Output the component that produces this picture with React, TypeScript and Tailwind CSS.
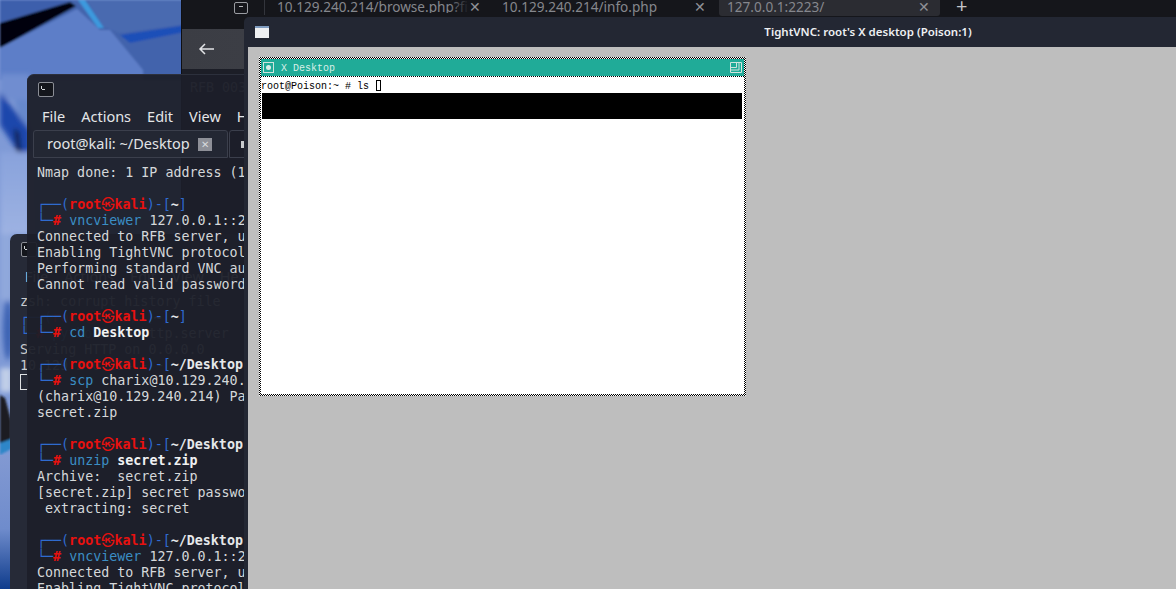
const mono = "font-['DejaVu_Sans_Mono','Noto_Sans_CJK_KR',monospace]"

// box-drawing prompt, two rows, same as kali zsh
const Prompt = ({ path }: { path: string }) => (
  <div className="h-4">
    <span className="text-[#2f6bd0]">┌──(</span>
    <span className="font-bold text-[#e8110f]">root㉿kali</span>
    <span className="text-[#2f6bd0]">)-[</span>
    <span className="font-bold text-[#e6e8ea]">{path}</span>
    <span className="text-[#2f6bd0]">]</span>
  </div>
)

const Cmd = ({ cmd, arg, bold }: { cmd: string; arg: string; bold?: boolean }) => (
  <div className="h-4">
    <span className="text-[#2f6bd0]">└─</span>
    <span className="font-bold text-[#e8110f]">#</span>
    <span className="text-[#3b8ec4]"> {cmd} </span>
    <span className={bold ? "font-bold text-[#f0f1f2]" : ""}>{arg}</span>
  </div>
)

const Line = ({ children }: { children?: string }) => <div className="h-4 whitespace-pre">{children}</div>

const TermIcon = () => (
  <div className="w-4 h-[15px] rounded-[2px] border border-[#8b8e96] bg-[#14161c] relative">
    <div className="absolute left-[2px] top-[3px] w-[1px] h-[3px] bg-[#d5d7da]" />
    <div className="absolute left-[3px] top-[6px] w-[3px] h-[1px] bg-[#d5d7da]" />
  </div>
)

const Menu = () => (
  <div className="h-[26px] flex items-center pl-[15px] pb-[1px] gap-[16px] text-[14.5px] text-[#e4e6e8] font-['Noto_Sans',sans-serif] whitespace-nowrap">
    <span>File</span>
    <span>Actions</span>
    <span>Edit</span>
    <span>View</span>
    <span>Help</span>
  </div>
)

const Wallpaper = () => (
  <svg className="absolute inset-0" width="1176" height="589" viewBox="0 0 1176 589">
    <defs>
      <filter id="soft" x="-20%" y="-20%" width="140%" height="140%"><feGaussianBlur stdDeviation="2.5" /></filter>
      <filter id="soft2" x="-5%" y="-5%" width="110%" height="110%"><feGaussianBlur stdDeviation="1" /></filter>
      <linearGradient id="bot" x1="0" y1="0" x2="0" y2="1">
        <stop offset="0" stopColor="#8299d2" />
        <stop offset="0.55" stopColor="#6f8ccc" />
        <stop offset="1" stopColor="#0f3c8c" />
      </linearGradient>
      <linearGradient id="mid" x1="0" y1="0" x2="0" y2="1">
        <stop offset="0" stopColor="#88a2dc" />
        <stop offset="1" stopColor="#9db2e2" />
      </linearGradient>
    </defs>
    <rect width="200" height="589" fill="#7f9ad6" />
    <g filter="url(#soft2)">
      <rect x="0" y="0" width="200" height="80" fill="#4364ac" />
      <polygon points="0,0 76,0 0,26" fill="#3c5eac" />
      <polygon points="0,23 70,2 76,6 0,48" fill="#060608" />
      <polygon points="0,48 77,9 100,30 110,30 143,70 143,80 0,80" fill="#5d7ec8" />
      <polygon points="78,0 85,0 104,28 98,28" fill="#3d9ade" />
      <polygon points="87,0 200,0 200,22 120,33 104,27" fill="#4a6ab0" />
      <polygon points="120,35 200,23 200,29 130,43" fill="#1f4fb8" />
    </g>
    <g filter="url(#soft)">
      <rect x="0" y="74" width="30" height="26" fill="#6f8dd0" />
      <polygon points="0,92 30,130 30,152 18,152 0,125" fill="#1e46ac" />
      <polygon points="14,100 30,100 30,130 20,118" fill="#6688cc" />
      <polygon points="14,128 19,132 21,152 17,152" fill="#0a1430" />
      <rect x="0" y="152" width="30" height="82" fill="url(#mid)" />
      <rect x="0" y="234" width="12" height="66" fill="#90a8dc" />
      <ellipse cx="8" cy="330" rx="5" ry="30" fill="#3c63b4" />
      <rect x="0" y="368" width="12" height="24" fill="#c0cee8" />
    </g>
    <g filter="url(#soft2)">
      <polygon points="0,395 5,398 11,420 11,440 0,445" fill="#1c1c20" />
      <polygon points="0,443 11,439 11,449 0,455" fill="#2f86c8" />
    </g>
    <rect x="0" y="455" width="12" height="134" fill="url(#bot)" />
  </svg>
)

const BrowserWindow = () => (
  <div className="absolute left-[181px] top-0 right-0 h-[589px] bg-[#1c1e27] border-l border-[#0e0f13] flex flex-col overflow-hidden">
    <div className="h-[29px] bg-[#15161b] shrink-0 flex items-start text-[13.6px] leading-[13px] text-[#85878d] font-['Noto_Sans',sans-serif] whitespace-nowrap">
      <div className="ml-[52px] mt-[2px] w-[14px] h-[12px] rounded-[2px] border border-[#9a9ca2] relative">
        <div className="absolute left-[4px] top-[3px] w-[4px] h-[1px] bg-[#b5b7bb]" />
      </div>
      <div className="ml-[16px] w-[1px] h-[15px] bg-[#33353c]" />
      <div className="ml-[12px] w-[192px] overflow-hidden relative">
        <span>10.129.240.214/browse.php?file=</span>
        <div className="absolute right-0 top-0 h-full w-5 bg-gradient-to-r from-transparent to-[#15161b]" />
      </div>
      <span className="text-[#8f9197]">✕</span>
      <span className="ml-[21px] w-[192px]">10.129.240.214/info.php</span>
      <span className="text-[#8f9197]">✕</span>
      <div className="ml-[13px] w-[221px] h-[16px] bg-[#2b2c32] rounded-b-[3px] flex pl-[8px] pr-[10px] justify-between">
        <span>127.0.0.1:2223/</span>
        <span className="text-[#8f9197]">✕</span>
      </div>
      <span className="ml-[16px] text-[20px] leading-[12px] text-[#c4c5c9]">+</span>
    </div>
    <div className="h-[40px] shrink-0 bg-gradient-to-r from-[#3b3d44] to-[#4a4c54] flex items-center pl-[16px]">
      <svg width="18" height="14" viewBox="0 0 18 14" fill="none" stroke="#e2e3e6" strokeWidth="1.5">
        <path d="M16 7H2M7 2 2 7l5 5" />
      </svg>
    </div>
    <div className={`${mono} pl-[8px] pt-[11px] text-[13.33px] leading-4 text-[#a0a4ac]`}>RFB 003.008</div>
  </div>
)

const BackTerminal = () => (
  <div className="absolute left-[10px] top-[234px] w-[230px] h-[355px] rounded-t-[7px] bg-[#262a37] overflow-hidden">
    <div className="h-[30px] flex items-center pl-[11px]"><TermIcon /></div>
    <Menu />
    <div className={`${mono} pl-[10px] pt-[4px] text-[13.33px] leading-4 text-[#c8ccd0] whitespace-nowrap`}>
      <Line>zsh: corrupt history file</Line>
      <Prompt path="~" />
      <Cmd cmd="python3" arg="-m http.server" />
      <Line>Serving HTTP on 0.0.0.0</Line>
      <Line>10.129.240.214 - -</Line>
      <div className="w-[8px] h-[16px] border border-[#e0e2e4]" />
    </div>
  </div>
)

const FrontTerminal = () => (
  <div className="absolute left-[27px] top-[74px] w-[230px] h-[515px] rounded-t-[7px] bg-[#1c1f29]/[0.95] overflow-hidden border-t border-[#2c303c]">
    <div className="h-[29px] flex items-center pl-[11px]"><TermIcon /></div>
    <Menu />
    <div className="h-[30px] pl-[6px] flex gap-[1px] font-['Noto_Sans',sans-serif] text-[14.5px] text-[#e2e4e6] whitespace-nowrap">
      <div className="w-[195px] h-[28px] shrink-0 rounded-t-[3px] border border-[#3b3f4c] bg-[#232733] flex items-center pl-[13px] pr-[15px] justify-between">
        <span>root@kali: ~/Desktop</span>
        <span className="w-[14px] h-[13px] bg-[#8e9098] text-[#d8d9dc] text-[10px] leading-[13px] text-center">✕</span>
      </div>
      <div className="w-[40px] h-[28px] shrink-0 rounded-t-[3px] border border-[#3b3f4c] pl-[11px] flex items-center">
        <span className="w-[3px] h-[7px] bg-[#c8cacd]" />
      </div>
    </div>
    <div className={`${mono} pl-[10px] pt-[5px] text-[13.33px] leading-4 text-[#d5d8da] whitespace-nowrap`}>
      <Line>Nmap done: 1 IP address (1 host up) scanned</Line>
      <Line />
      <Prompt path="~" />
      <Cmd cmd="vncviewer" arg="127.0.0.1::2223 -passwd secret" />
      <Line>Connected to RFB server, using protocol</Line>
      <Line>Enabling TightVNC protocol extensions</Line>
      <Line>Performing standard VNC authentication</Line>
      <Line>Cannot read valid password from file</Line>
      <Line />
      <Prompt path="~" />
      <Cmd cmd="cd" arg="Desktop" bold />
      <Line />
      <Prompt path="~/Desktop" />
      <Cmd cmd="scp" arg="charix@10.129.240.214:secret.zip ." />
      <Line>(charix@10.129.240.214) Password for charix</Line>
      <Line>secret.zip</Line>
      <Line />
      <Prompt path="~/Desktop" />
      <Cmd cmd="unzip" arg="secret.zip" bold />
      <Line>Archive:  secret.zip</Line>
      <Line>[secret.zip] secret password:</Line>
      <Line> extracting: secret</Line>
      <Line />
      <Prompt path="~/Desktop" />
      <Cmd cmd="vncviewer" arg="127.0.0.1::2223 -passwd secret" />
      <Line>Connected to RFB server, using protocol</Line>
      <Line>Enabling TightVNC protocol extensions</Line>
    </div>
  </div>
)

const checker = "bg-[repeating-conic-gradient(#000_0_25%,#fff_0_50%)] bg-[length:2px_2px]"

const XDesktop = () => (
  <div className={`w-[487px] h-[339px] p-[2px] flex flex-col ${checker}`}>
    <div className="h-[17px] shrink-0 bg-[#20ab98] flex items-center pl-[2px] pr-[2px] font-['Liberation_Mono',monospace] text-[10px] text-[#d8efe8]">
      <div className="w-[11px] h-[11px] border border-[#cfe4de] flex items-center justify-center">
        <div className="w-[5px] h-[5px] rounded-full bg-[#d8ebe6]" />
      </div>
      <span className="ml-[7px] pt-[2px]">X Desktop</span>
      <svg className="ml-auto" width="12" height="11" viewBox="0 0 12 11" fill="none" stroke="#cfe4de">
        <path d="M.5.5h11v10H.5zM6.5.5v5h-6M9 .5v7.5H.5" />
      </svg>
    </div>
    <div className="h-[1px] shrink-0" />
    <div className="flex-1 bg-white pr-[1px] font-['Liberation_Mono',monospace] text-[10px] text-black">
      <div className="h-[16px] pt-[4px] leading-[12px] flex">
        <span className="whitespace-pre">root@Poison:~ # ls</span>
        <span className="ml-[7px] w-[5px] h-[11px] -mt-[1px] border border-black" />
      </div>
      <div className="h-[26px] ml-[1px] mr-[1px] bg-black" />
    </div>
  </div>
)

const VncWindow = () => (
  <div className="absolute left-[244px] top-[17px] right-0 h-[572px] rounded-tl-[5px] bg-[#232733] pl-[4px] flex flex-col">
    <div className="h-[30px] shrink-0 flex items-center relative">
      <div className="ml-[7px] w-[14px] h-[12px] bg-[#eef0f2] border-t-2 border-[#7f9cc0]" />
      <div className="absolute inset-0 pl-[312px] flex items-center justify-center">
        <span className="font-['Noto_Sans',sans-serif] font-semibold text-[11.5px] text-[#eef0f2]">TightVNC: root's X desktop (Poison:1)</span>
      </div>
    </div>
    <div className="flex-1 bg-[#bebebe] pl-[11px] pt-[10px]">
      <XDesktop />
    </div>
  </div>
)

export default function App() {
  return (
    <div className="relative w-[1176px] h-[589px] overflow-hidden bg-[#7f9ad6]">
      <Wallpaper />
      <BrowserWindow />
      <BackTerminal />
      <FrontTerminal />
      <VncWindow />
    </div>
  )
}
